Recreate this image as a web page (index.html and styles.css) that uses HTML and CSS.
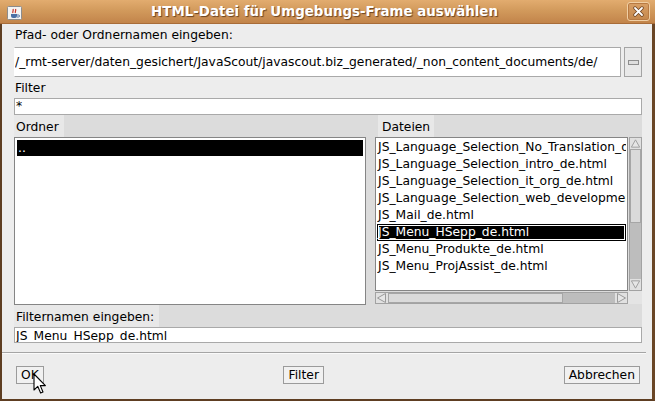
FILE: index.html
```html
<!DOCTYPE html>
<html lang="de">
<head>
  <meta charset="UTF-8">
  <title>HTML-Datei für Umgebungs-Frame auswählen</title>
  <link rel="stylesheet" href="styles.css">
</head>
<body>

  <div class="window">
    <div class="titlebar">
      <span class="app-icon">
        <svg width="15" height="14" viewBox="0 0 15 14">
          <rect x="0.5" y="0.5" width="14" height="13" rx="1" fill="#f4f4f4" stroke="#8c8c8c"/>
          <path d="M4 8 h6 v2 a2 2 0 0 1 -2 2 h-2 a2 2 0 0 1 -2 -2 z" fill="#4a6fa5"/>
          <path d="M10 9 h1.5 a1 1 0 0 1 0 2 h-1.5" fill="none" stroke="#4a6fa5"/>
          <path d="M6 7 c-1 -1.5 1 -2 0 -4 M8.5 7 c-1 -1.5 1 -2 0 -4" fill="none" stroke="#c8352b" stroke-width="1.2"/>
        </svg>
      </span>
      <span class="title">HTML-Datei für Umgebungs-Frame auswählen</span>
      <span class="close-btn">
        <svg width="11" height="11" viewBox="0 0 11 11">
          <path d="M2 2 L9 9 M9 2 L2 9" stroke="#6e4422" stroke-width="3.4" stroke-linecap="round"/>
          <path d="M2 2 L9 9 M9 2 L2 9" stroke="#ffffff" stroke-width="1.8" stroke-linecap="round"/>
        </svg>
      </span>
    </div>

    <div class="content">
      <div class="label first">Pfad- oder Ordnernamen eingeben:</div>
      <div class="path-row">
        <div class="field path-field">/_rmt-server/daten_gesichert/JavaScout/javascout.biz_generated/_non_content_documents/de/</div>
        <div class="path-btn"><span class="path-btn-icon"></span></div>
      </div>

      <div class="label">Filter</div>
      <div class="field line-field">*</div>

      <div class="panel">
        <div class="columns">
          <div class="col">
            <div class="col-head"><span class="tab">Ordner</span></div>
            <div class="list dir-list">
              <div class="row selected">..</div>
            </div>
          </div>
          <div class="col">
            <div class="col-head"><span class="tab files-tab">Dateien</span></div>
            <div class="scroll-frame">
              <div class="list file-list">
                <div class="row">JS_Language_Selection_No_Translation_de.html</div>
                <div class="row">JS_Language_Selection_intro_de.html</div>
                <div class="row">JS_Language_Selection_it_org_de.html</div>
                <div class="row">JS_Language_Selection_web_development_de.html</div>
                <div class="row">JS_Mail_de.html</div>
                <div class="row selected focused">JS_Menu_HSepp_de.html</div>
                <div class="row">JS_Menu_Produkte_de.html</div>
                <div class="row">JS_Menu_ProjAssist_de.html</div>
              </div>
              <div class="vscroll">
                <div class="arrow">
                  <svg width="12" height="11" viewBox="0 0 12 11"><path d="M1.5 9.5 L6 1.5 L10.5 9.5 Z" fill="#e6e6e6" stroke="#9a9a9a"/></svg>
                </div>
                <div class="thumb v-thumb"></div>
                <div class="track"></div>
                <div class="arrow">
                  <svg width="12" height="11" viewBox="0 0 12 11"><path d="M1.5 1.5 L6 9.5 L10.5 1.5 Z" fill="#e6e6e6" stroke="#9a9a9a"/></svg>
                </div>
              </div>
              <div class="hscroll">
                <div class="arrow">
                  <svg width="12" height="12" viewBox="0 0 12 12"><path d="M9.5 1.5 L1.5 6 L9.5 10.5 Z" fill="#e6e6e6" stroke="#9a9a9a"/></svg>
                </div>
                <div class="thumb h-thumb"></div>
                <div class="track"></div>
                <div class="arrow">
                  <svg width="12" height="12" viewBox="0 0 12 12"><path d="M2.5 1.5 L10.5 6 L2.5 10.5 Z" fill="#e6e6e6" stroke="#9a9a9a"/></svg>
                </div>
              </div>
              <div class="corner"></div>
            </div>
          </div>
        </div>
        <div class="col-head"><span class="tab">Filternamen eingeben:</span></div>
      </div>
      <div class="field name-field">JS_Menu_HSepp_de.html</div>

      <div class="separator"></div>

      <div class="buttons">
        <span class="btn">OK</span>
        <span class="btn">Filter</span>
        <span class="btn">Abbrechen</span>
      </div>
    </div>

    <!-- mouse pointer over the OK button -->
    <svg class="pointer" width="14" height="22" viewBox="0 0 14 22">
      <path d="M1 1 L1 17 L4.8 13.4 L7.6 20 L10 19 L7.3 12.6 L12.4 12.6 Z" fill="#ffffff" stroke="#000000" stroke-width="1.1" stroke-linejoin="round"/>
    </svg>
  </div>

</body>
</html>
```

FILE: styles.css
```css
* {
  margin: 0;
  padding: 0;
  box-sizing: border-box;
}

body {
  font-family: "DejaVu Sans", Verdana, sans-serif;
  font-size: 12.3px;
  color: #000;
  background-color: #5c3d23;
  overflow: hidden;
}

.window {
  position: relative;
  width: 655px;
  height: 401px;
  display: flex;
  flex-direction: column;
  background-color: #ededed;
  border-left: 2px solid #5e3e22;
  border-right: 3px solid #6a4626;
  border-bottom: 2px solid #5e3e22;
}

/* title bar */

.titlebar {
  height: 24px;
  margin: 0 -3px 0 -2px;
  display: flex;
  align-items: center;
  background: linear-gradient(#e2ac6f, #d29a5c 45%, #c2844a);
  border-bottom: 1px solid #a86c38;
}

.app-icon {
  display: flex;
  margin-left: 7px;
  margin-top: 2px;
}

.title {
  flex: 1;
  text-align: center;
  font-weight: bold;
  font-size: 13.4px;
  color: #fff;
  text-shadow: 1px 1px 1px #6b4322;
}

.close-btn {
  width: 23px;
  height: 19px;
  margin-right: 5px;
  display: flex;
  align-items: center;
  justify-content: center;
  border: 1px solid #f1cfa4;
  border-radius: 3px;
  background: linear-gradient(#d9a066, #c4874c);
  box-shadow: inset 0 0 0 1px #b87a42;
}

/* content */

.content {
  flex: 1;
  display: flex;
  flex-direction: column;
  padding: 0 10px 0 12px;
}

.label {
  height: 15px;
  line-height: 15px;
  padding-left: 1px;
  margin-top: 4px;
}

.field {
  background: #fff;
  border: 1px solid #a9a9a9;
  white-space: nowrap;
  overflow: hidden;
}

.path-row {
  display: flex;
  height: 30px;
  margin-top: 4px;
}

.path-field {
  flex: 1;
  line-height: 28px;
  padding-left: 0;
  margin-right: 3px;
  border-left-color: #fff;
}

.path-btn {
  width: 18px;
  border: 1px solid #a4a4a4;
  background: #e9e9e9;
  display: flex;
  align-items: center;
  justify-content: center;
}

.path-btn-icon {
  width: 11px;
  height: 5px;
  border: 1px solid #8e8e8e;
  background: #dedede;
}

.line-field {
  height: 17px;
  line-height: 15px;
  margin-top: 2px;
  padding-left: 1px;
}

.name-field {
  height: 16px;
  line-height: 14px;
  padding: 1px 0 0 1px;
}

/* the two lists */

.panel {
  background: #dcdcdc;
}

.columns {
  display: grid;
  grid-template-columns: 352px 1fr;
  column-gap: 9px;
}

.col-head {
  height: 22px;
  display: flex;
}

.tab {
  background: #e8e8e8;
  padding: 5px 5px 0 2px;
  line-height: 15px;
}

.files-tab {
  margin-left: 3px;
  padding: 5px 4px 0 4px;
}

.list {
  background: #fff;
  border: 1px solid #858585;
  padding: 2px;
  overflow: hidden;
}

.dir-list {
  height: 168px;
}

.row {
  height: 17px;
  line-height: 17px;
  white-space: nowrap;
  overflow: hidden;
  padding-left: 1px;
}

.dir-list .row {
  height: 16px;
  line-height: 16px;
}

.row.selected {
  background: #000;
  color: #fff;
}

.row.focused {
  box-shadow: inset 0 0 0 1px #000, inset 0 0 0 2px #fff;
}

.scroll-frame {
  display: grid;
  grid-template-columns: 1fr 14px;
  grid-template-rows: 154px 13px;
}

.file-list {
  padding: 1px 1px 0 1px;
}

.vscroll {
  display: flex;
  flex-direction: column;
  margin-left: 1px;
  border: 1px solid #a2a2a2;
  background: #bdbdbd;
}

.hscroll {
  display: flex;
  margin-top: 1px;
  border: 1px solid #a2a2a2;
  background: #bdbdbd;
}

.arrow {
  background: #e1e1e1;
  display: flex;
  align-items: center;
  justify-content: center;
}

.vscroll .arrow {
  height: 11px;
}

.hscroll .arrow {
  width: 12px;
}

.thumb {
  background: #dadada;
  border: 1px solid #a6a6a6;
}

.v-thumb {
  height: 74px;
}

.h-thumb {
  width: 175px;
}

.track {
  flex: 1;
}

.corner {
  background: #e4e4e4;
}

/* bottom */

.separator {
  height: 2px;
  margin: 9px -4px 0 -12px;
  border-top: 1px solid #a5a5a5;
  border-bottom: 1px solid #fafafa;
}

.buttons {
  display: flex;
  justify-content: space-between;
  margin-top: 12px;
  padding: 0 2px;
}

.btn {
  height: 18px;
  line-height: 16px;
  padding: 0 4px;
  border: 1px solid #9b9b9b;
  background: #f1f1f1;
}

.pointer {
  position: absolute;
  left: 31px;
  top: 373px;
}
```
